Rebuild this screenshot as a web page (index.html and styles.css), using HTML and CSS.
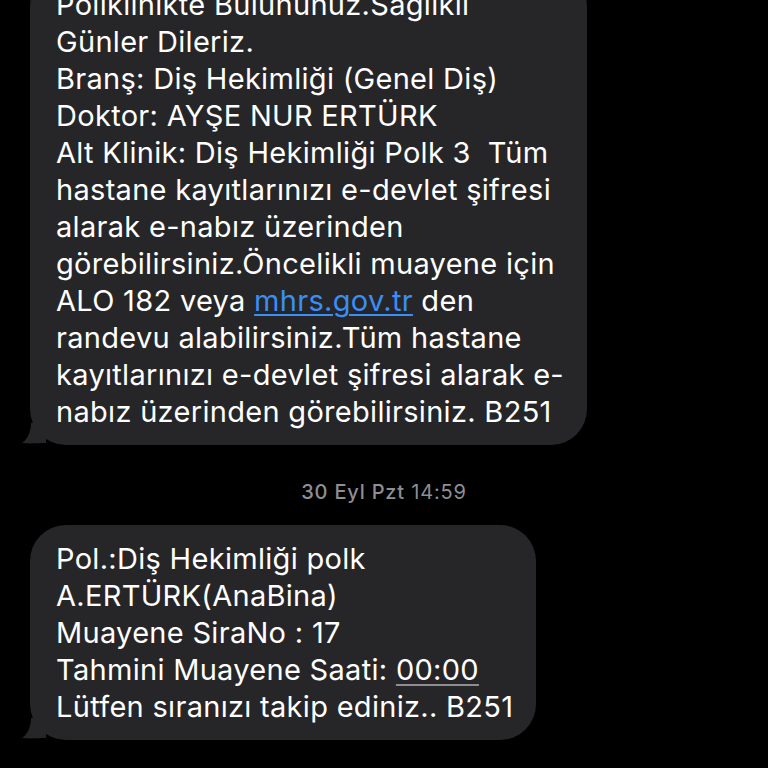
FILE: index.html
```html
<!DOCTYPE html>
<html lang="tr">
<head>
<meta charset="utf-8">
<link rel="stylesheet" href="styles.css">
</head>
<body>
<div class="thread">
  <div class="bubble first">
    Poliklinikte Bulununuz.Sağlıklı<br>
    Günler Dileriz.<br>
    Branş: Diş Hekimliği (Genel Diş)<br>
    Doktor: AYŞE NUR ERTÜRK<br>
    Alt Klinik: Diş Hekimliği Polk 3&nbsp; Tüm<br>
    hastane kayıtlarınızı e-devlet şifresi<br>
    alarak e-nabız üzerinden<br>
    görebilirsiniz.Öncelikli muayene için<br>
    ALO 182 veya <span class="link">mhrs.gov.tr</span> den<br>
    randevu alabilirsiniz.Tüm hastane<br>
    kayıtlarınızı e-devlet şifresi alarak e-<br>
    nabız üzerinden görebilirsiniz. B251
    <svg class="tail" width="24" height="22" viewBox="0 0 24 22"><path d="M24 0 L24 20 C18 20 8 21 0 20 C6 16 9 8 9 0 Z" fill="#262628"/></svg>
  </div>
  <div class="stamp"><span class="date">30 Eyl Pzt</span> 14:59</div>
  <div class="bubble">
    Pol.:Diş Hekimliği polk<br>
    A.ERTÜRK(AnaBina)<br>
    Muayene SiraNo : 17<br>
    Tahmini Muayene Saati: <span class="time">00:00</span><br>
    Lütfen sıranızı takip ediniz.. B251
    <svg class="tail" width="24" height="22" viewBox="0 0 24 22"><path d="M24 0 L24 20 C18 20 8 21 0 20 C6 16 9 8 9 0 Z" fill="#262628"/></svg>
  </div>
</div>
</body>
</html>
```
FILE: styles.css
```css
html, body {
  margin: 0;
  padding: 0;
  background: #000;
}
body {
  width: 768px;
  height: 768px;
  overflow: hidden;
  font-family: Inter, "Noto Sans", sans-serif;
}
.thread {
  display: flex;
  flex-direction: column;
  align-items: flex-start;
  padding-left: 30px;
}
.bubble {
  position: relative;
  background: #262628;
  color: #fff;
  font-size: 29px;
  letter-spacing: 0.3px;
  line-height: 37px;
  padding: 15px 23px 15px 26px;
  border-radius: 36px;
  white-space: nowrap;
}
.bubble.first {
  margin-top: -29px;
}
.tail {
  position: absolute;
  left: -8px;
  bottom: 0;
}
.link {
  color: #3a8ef6;
  text-decoration: underline;
  text-decoration-thickness: 2px;
  text-underline-offset: 3px;
}
.time {
  text-decoration: underline;
  text-decoration-color: #8d8d92;
  text-decoration-thickness: 2px;
  text-underline-offset: 4px;
}
.stamp {
  align-self: stretch;
  margin: 36px 0 22px -30px;
  text-align: center;
  color: #8e8e93;
  font-size: 20px;
  letter-spacing: 0.8px;
  line-height: 22px;
}
.date {
  font-weight: 500;
}
```
